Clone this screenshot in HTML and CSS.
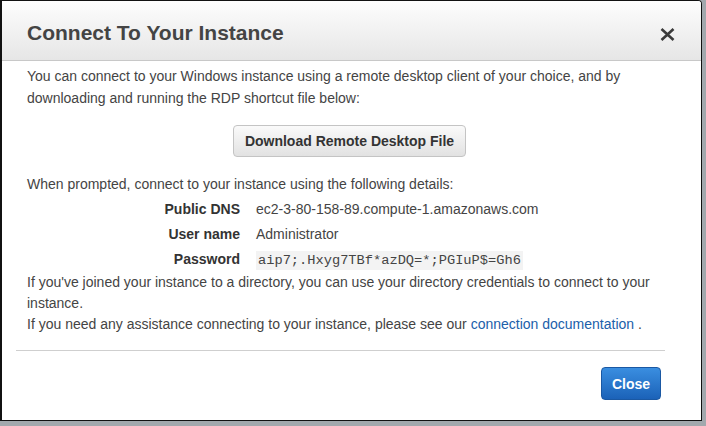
FILE: index.html
```html
<!DOCTYPE html>
<html>
<head>
<meta charset="utf-8">
<link rel="stylesheet" href="styles.css">
</head>
<body>
<div class="dialog">
  <div class="header">
    <h1 class="title">Connect To Your Instance</h1>
    <svg class="x" width="15" height="13" viewBox="0 0 15 13"><path d="M1.5 1 L13.5 12 M13.5 1 L1.5 12" stroke="#3a3a3a" stroke-width="2.6" fill="none"/></svg>
  </div>
  <div class="body">
    <p class="intro">You can connect to your Windows instance using a remote desktop client of your choice, and by downloading and running the RDP shortcut file below:</p>
    <div class="btn-row"><button class="btn">Download Remote Desktop File</button></div>
    <p class="line">When prompted, connect to your instance using the following details:</p>
    <div class="details">
      <div class="label">Public DNS</div><div class="value">ec2-3-80-158-89.compute-1.amazonaws.com</div>
      <div class="label">User name</div><div class="value">Administrator</div>
      <div class="label">Password</div><div class="value"><span class="pw">aip7;.Hxyg7TBf*azDQ=*;PGIuP$=Gh6</span></div>
    </div>
    <p class="line">If you've joined your instance to a directory, you can use your directory credentials to connect to your instance.</p>
    <p class="line">If you need any assistance connecting to your instance, please see our <a class="link" href="#">connection documentation</a> .</p>
  </div>
  <div class="footer">
    <button class="close">Close</button>
  </div>
</div>
</body>
</html>
```

FILE: styles.css
```css
html, body {
  margin: 0;
  padding: 0;
}
body {
  width: 706px;
  height: 426px;
  background: #a2a8ad;
  font-family: "Liberation Sans", Arial, sans-serif;
  color: #444;
  overflow: hidden;
}
.dialog {
  box-sizing: border-box;
  width: 702px;
  height: 421px;
  background: #fff;
  border: 1px solid #111;
  border-left-width: 2px;
  border-top-right-radius: 4px;
  overflow: hidden;
}
.header {
  height: 60px;
  box-sizing: border-box;
  padding: 0 27px 0 25px;
  display: flex;
  align-items: center;
  justify-content: space-between;
  background: linear-gradient(#fdfdfd, #e6e6e6);
  border-bottom: 1px solid #c8c8c8;
}
.title {
  margin: 0;
  padding-top: 5px;
  font-size: 21px;
  line-height: 24px;
  font-weight: bold;
  color: #444;
}
.x {
  margin-top: 7px;
  margin-right: -1px;
}
.body {
  margin: 0 36px 0 14px;
  padding: 4px 11px 15px;
  border-bottom: 1px solid #cfcfcf;
  font-size: 14px;
}
.intro {
  margin: 0;
  line-height: 22px;
}
.btn-row {
  display: flex;
  justify-content: center;
  margin-top: 16px;
  padding-left: 18px;
}
.btn {
  height: 32px;
  padding: 0 11px;
  font-family: "Liberation Sans", Arial, sans-serif;
  font-size: 14px;
  font-weight: bold;
  color: #333;
  background: linear-gradient(#fafafa, #e2e2e2);
  border: 1px solid #c4c4c4;
  border-radius: 4px;
}
.line {
  margin: 0;
  line-height: 21px;
}
.btn-row + .line {
  margin-top: 17px;
}
.details {
  display: grid;
  grid-template-columns: 213px auto;
  column-gap: 16px;
  grid-auto-rows: 25px;
  align-items: center;
  line-height: 21px;
  margin-top: 2px;
}
.label {
  text-align: right;
  font-weight: bold;
  color: #333;
}
.value {
  color: #444;
}
.pw {
  font-family: "Liberation Mono", "Courier New", monospace;
  font-size: 13.7px;
  background: #f3f3f3;
  padding: 2px 2px;
  color: #444;
}
.link {
  color: #2060aa;
  text-decoration: none;
}
.footer {
  display: flex;
  justify-content: flex-end;
  padding: 16px 40px 0 0;
}
.close {
  width: 60px;
  height: 33px;
  font-family: "Liberation Sans", Arial, sans-serif;
  font-size: 14px;
  font-weight: bold;
  color: #fff;
  background: linear-gradient(#3a8ee0, #1b62b8);
  border: 1px solid #1a58a3;
  border-radius: 4px;
  padding: 0;
}
```
